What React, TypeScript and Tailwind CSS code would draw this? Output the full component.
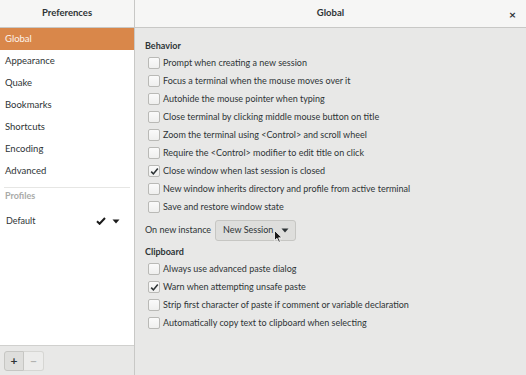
import React from "react";

const navItems = [
  "Global",
  "Appearance",
  "Quake",
  "Bookmarks",
  "Shortcuts",
  "Encoding",
  "Advanced",
];

const behavior: [string, boolean][] = [
  ["Prompt when creating a new session", false],
  ["Focus a terminal when the mouse moves over it", false],
  ["Autohide the mouse pointer when typing", false],
  ["Close terminal by clicking middle mouse button on title", false],
  ["Zoom the terminal using <Control> and scroll wheel", false],
  ["Require the <Control> modifier to edit title on click", false],
  ["Close window when last session is closed", true],
  ["New window inherits directory and profile from active terminal", false],
  ["Save and restore window state", false],
];

const clipboard: [string, boolean][] = [
  ["Always use advanced paste dialog", false],
  ["Warn when attempting unsafe paste", true],
  ["Strip first character of paste if comment or variable declaration", false],
  ["Automatically copy text to clipboard when selecting", false],
];

function Check({ on }: { on: boolean }) {
  return (
    <div className="w-[12px] h-[12px] rounded-[2px] border border-[#b9b9b6] bg-gradient-to-b from-[#fafafa] to-[#efefee] flex items-center justify-center shrink-0">
      {on && (
        <svg width="9" height="9" viewBox="0 0 9 9">
          <path d="M1.2 4.6 L3.4 6.9 L7.8 1.6" fill="none" stroke="#2e3436" strokeWidth="1.6" />
        </svg>
      )}
    </div>
  );
}

function CheckRow({ label, on }: { label: string; on: boolean }) {
  return (
    <div className="h-[18px] flex items-center gap-[3px] pl-[3px] whitespace-nowrap">
      <Check on={on} />
      <span>{label}</span>
    </div>
  );
}

export default function App() {
  return (
    <div
      className="w-[526px] h-[375px] flex flex-col bg-[#e8e8e7] text-[#2e3436] text-[9px] overflow-hidden"
      style={{ fontFamily: 'Lato, "Noto Sans", sans-serif' }}
    >
      <div className="h-[28px] flex shrink-0 bg-[#f6f6f5] border-b border-[#c8c8c6]">
        <div className="w-[135px] border-r border-[#c8c8c6] flex items-center justify-center font-bold text-[9.5px]">
          Preferences
        </div>
        <div className="flex-1 flex items-center justify-center font-bold text-[9.5px] relative">
          Global
          <span className="absolute right-[10px] top-[6px] text-[12px] font-bold">×</span>
        </div>
      </div>
      <div className="flex flex-1 min-h-0">
        <div className="w-[135px] border-r border-[#c8c8c6] flex flex-col shrink-0">
          <div className="flex-1 bg-white">
            {navItems.map((n, i) => (
              <div
                key={n}
                className={
                  "h-[22px] flex items-center pl-[5px] text-[9.5px] " +
                  (i === 0 ? "bg-[#d9874a] text-[#fdf3ea]" : "")
                }
              >
                {n}
              </div>
            ))}
            <div className="mx-[4px] mt-[5px] border-t border-[#e6e6e4]" />
            <div className="h-[16px] flex items-center pl-[5px] text-[#a9aaa8] font-bold">Profiles</div>
            <div className="h-[34px] flex items-center pl-[6px] pr-[14px]">
              <span className="flex-1">Default</span>
              <svg width="10" height="8" viewBox="0 0 10 8">
                <path d="M1 4.3 L3.6 6.8 L9 1" fill="none" stroke="#1c1c1c" strokeWidth="2" />
              </svg>
              <svg width="8" height="5" viewBox="0 0 8 5" className="ml-[6px]">
                <path d="M0.5 0.5 H7.5 L4 4.5 Z" fill="#1c1c1c" />
              </svg>
            </div>
          </div>
          <div className="h-[30px] border-t border-[#d0d0ce] bg-[#e8e8e7] flex items-center pl-[4px]">
            <div className="w-[20px] h-[20px] border border-[#c6c6c3] rounded-l-[3px] bg-[#dededc] flex items-center justify-center font-bold text-[12px]">+</div>
            <div className="w-[20px] h-[20px] border border-l-0 border-[#d6d6d3] rounded-r-[3px] bg-[#ececeb] flex items-center justify-center font-bold text-[12px] text-[#b1b2b0]">−</div>
          </div>
        </div>
        <div className="flex-1 pl-[10px] pt-[9px]">
          <div className="font-bold h-[17px] flex items-center">Behavior</div>
          {behavior.map(([l, on]) => (
            <CheckRow key={l} label={l} on={on} />
          ))}
          <div className="h-[26px] flex items-center mt-[1px] whitespace-nowrap">
            <span className="w-[70px]">On new instance</span>
            <div className="h-[21px] w-[81px] border border-[#c6c6c3] rounded-[3px] bg-[#dededc] flex items-center pl-[7px] relative">
              <span className="flex-1">New Session</span>
              <svg width="8" height="5" viewBox="0 0 8 5" className="mr-[6px]">
                <path d="M0.5 0.5 H7.5 L4 4.5 Z" fill="#2e3436" />
              </svg>
              <svg width="9" height="13" viewBox="0 0 9 13" className="absolute left-[58px] top-[9px]">
                <path d="M0.5 0.5 V10.5 L3 8.3 L4.8 12.3 L6.3 11.6 L4.6 7.8 L8 7.8 Z" fill="#1a1a1a" stroke="#ffffff" strokeWidth="0.8" />
              </svg>
            </div>
          </div>
          <div className="font-bold h-[17px] flex items-center">Clipboard</div>
          {clipboard.map(([l, on]) => (
            <CheckRow key={l} label={l} on={on} />
          ))}
        </div>
      </div>
    </div>
  );
}
